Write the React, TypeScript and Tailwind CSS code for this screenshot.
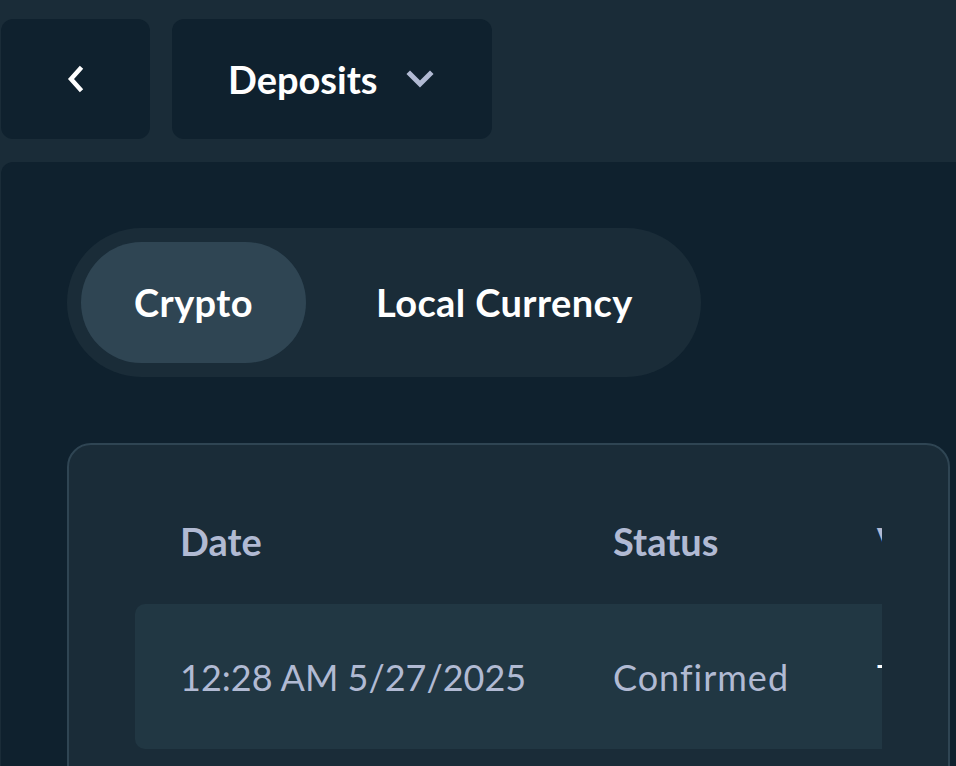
import React from "react";

export default function App() {
  return (
    <div
      className="w-[956px] h-[766px] overflow-hidden bg-[#1a2c38] pl-px"
      style={{ fontFamily: "Lato, 'Open Sans', sans-serif" }}
    >
      <div className="flex gap-[22px] pt-[19px]">
        <button className="w-[149px] h-[120px] rounded-[12px] bg-[#0f212e] flex items-center justify-center">
          <svg width="22" height="28" viewBox="0 0 22 28" fill="none">
            <path d="M15 4 L6 14 L15 24" stroke="#ffffff" strokeWidth="4.5" strokeLinecap="square" strokeLinejoin="miter" />
          </svg>
        </button>
        <button className="w-[320px] h-[120px] rounded-[12px] bg-[#0f212e] flex items-center pl-[56px] gap-[28px]">
          <span className="text-white text-[38px] font-bold leading-none">Deposits</span>
          <svg width="28" height="20" viewBox="0 0 28 20" fill="none">
            <path d="M4 5 L14 15 L24 5" stroke="#b1bad3" strokeWidth="5" strokeLinecap="square" />
          </svg>
        </button>
      </div>

      <div className="mt-[23px] w-[1015px] h-[700px] rounded-tl-[12px] rounded-tr-[12px] bg-[#0f212e] p-[66px]">
        <div className="inline-flex items-center h-[149px] rounded-full bg-[#1a2c38] p-[14px]">
          <div className="h-[121px] w-[225px] rounded-full bg-[#2f4553] flex items-center justify-center text-white text-[38px] font-bold tracking-[0.4px]">
            Crypto
          </div>
          <div className="h-[121px] pl-[70px] pr-[54px] flex items-center text-white text-[38px] font-bold tracking-[0.4px]">
            Local Currency
          </div>
        </div>

        <div className="mt-[66px] rounded-[24px] border-2 border-[#2f4553] bg-[#1a2c38] px-[66px] pt-[64px] pb-[40px]">
          <div className="overflow-hidden">
            <div className="w-[1100px]">
              <div className="flex h-[64px] items-center text-[38px] font-bold text-[#b1bad3]">
                <div className="w-[433px] pl-[45px]">Date</div>
                <div className="w-[264px] pl-[45px]">Status</div>
                <div className="w-[300px] pl-[45px]">Value</div>
              </div>
              <div className="mt-[31px] flex h-[145px] items-center rounded-[10px] bg-[#213743] text-[36px] text-[#b1bad3]">
                <div className="w-[433px] pl-[45px]">12:28 AM 5/27/2025</div>
                <div className="w-[264px] pl-[45px] tracking-[1px]">Confirmed</div>
                <div className="w-[300px] pl-[45px] text-white">Tx</div>
              </div>
            </div>
          </div>
        </div>
      </div>
    </div>
  );
}
